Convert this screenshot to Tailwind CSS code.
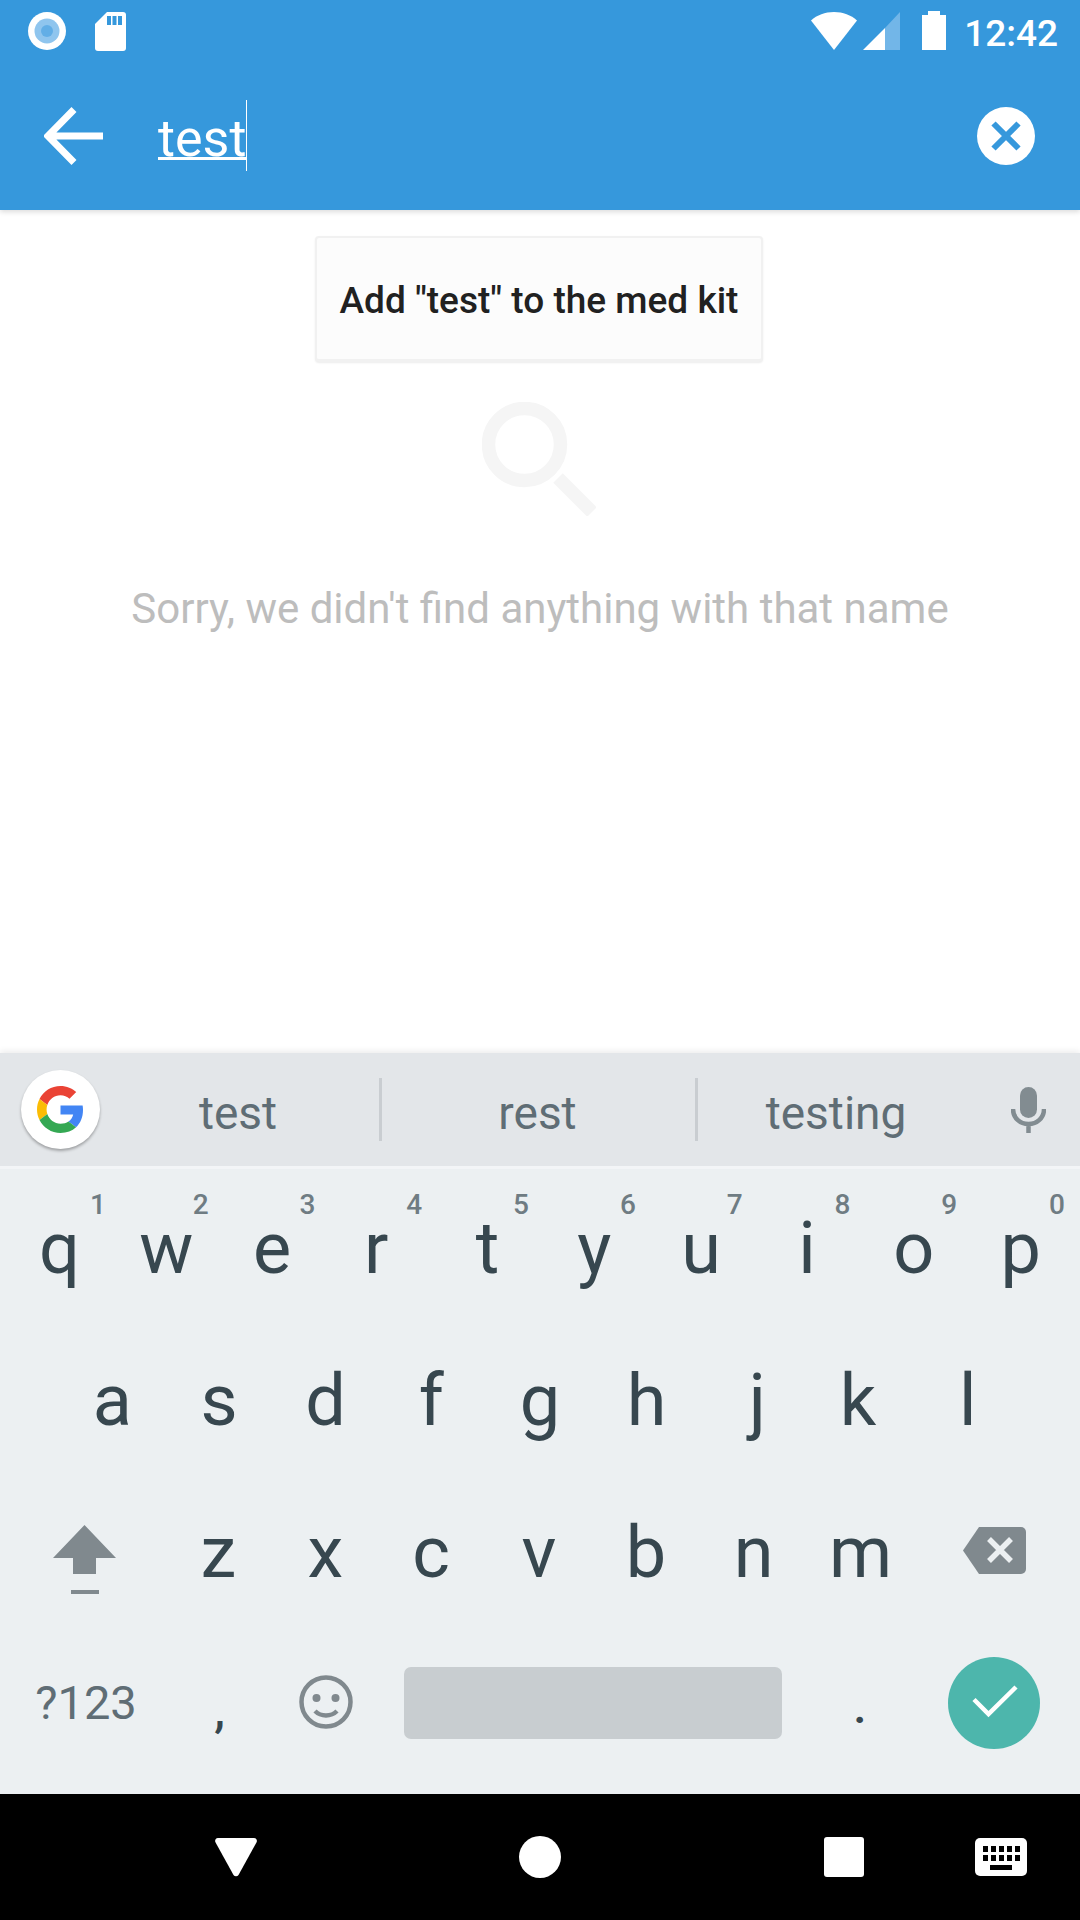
<!DOCTYPE html>
<html lang="en">
  <head>
    <meta charset="UTF-8" />
    <meta name="viewport" content="width=device-width, initial-scale=1.0" />
    <script src="https://cdn.jsdelivr.net/npm/@tailwindcss/browser@4"></script>
    <title>Search</title>
  </head>
  <body class="font-['Roboto',sans-serif]">
    <div class="w-[1080px] h-[1920px] flex flex-col bg-white overflow-hidden">
      <div class="shrink-0 bg-[#3698dc] shadow-[0_2px_5px_rgba(0,0,0,0.14)] z-10">
        <!-- status bar -->
        <div class="h-[72px] flex items-start pt-[11px] pl-[28px] pr-[22px] text-white">
          <svg class="w-[38px] h-[40px]" viewBox="0 0 38 40"><circle cx="19" cy="20" r="19" fill="#fff"/><circle cx="19" cy="20" r="12.5" fill="#8fc5ee"/><circle cx="19" cy="20" r="6" fill="#62aee6"/></svg>
          <svg class="w-[31px] h-[40px] ml-[29px]" viewBox="0 0 31 40"><path d="M12 1h16a3 3 0 0 1 3 3v33a3 3 0 0 1-3 3H3a3 3 0 0 1-3-3V13z" fill="#fff"/><path d="M12 5h4v9h-4zM17.500 5h4v9h-4zM23 5h4v9h-4z" fill="#3698dc"/></svg>
          <div class="ml-auto flex items-start">
            <svg class="w-[46px] h-[38px] mt-[1px]" viewBox="0 0 46 38"><path d="M0 8.500C6 3 14 0 23 0s17 3 23 8.500L23 38z" fill="#fff"/></svg>
            <svg class="w-[37px] h-[38px] ml-[6px] mt-[1px]" viewBox="0 0 37 38"><path d="M0 38 22 16v22z" fill="#fff"/><path d="M22 16 37 0v38H22z" fill="#72b6e8"/></svg>
            <svg class="w-[24px] h-[39px] ml-[22px]" viewBox="0 0 24 39"><path d="M6 4V0h12v4h6v35H0V4z" fill="#fff"/></svg>
            <span class="ml-[18px] text-[37px] leading-[40px] font-medium mt-[3px]">12:42</span>
          </div>
        </div>

        <!-- search header -->
        <div class="h-[138px] flex items-center pb-[10px] pl-[44px] pr-[45px]">
          <svg class="w-[59px] h-[58px]" viewBox="0 0 59 58" fill="none" stroke="#fff" stroke-width="7"><path d="M59 29H6M30 2.500 4 29l26 26.500"/></svg>
          <div class="relative ml-[55px]">
            <span class="block text-[52px] leading-[60px] pt-[6px] text-white underline decoration-[3px] underline-offset-[1px]">test</span>
            <div class="absolute right-[-1px] top-[-3px] w-px h-[71px] bg-white"></div>
          </div>
          <svg class="ml-auto w-[58px] h-[58px]" viewBox="0 0 58 58"><circle cx="29" cy="29" r="29" fill="#fff"/><path d="M16.500 16.500 41.500 41.500M41.500 16.500 16.500 41.500" stroke="#3698dc" stroke-width="6" fill="none"/></svg>
        </div>
      </div>

      <!-- results -->
      <div class="flex-1 flex flex-col items-center bg-white">
        <div class="mt-[26px] mr-[2px] w-[448px] h-[126px] shrink-0 bg-[#fcfcfc] border-2 border-[#f1f1f1] border-b-[3px] rounded-[4px] shadow-[0_1px_2px_rgba(0,0,0,0.08)] flex items-center justify-center pt-[4px]">
          <span class="text-[37px] leading-[44px] font-medium text-[#212121] whitespace-nowrap">Add "test" to the med kit</span>
        </div>
        <svg class="mt-[40px] mr-[2px] w-[114px] h-[114px]" viewBox="0 0 114 114" fill="none" stroke="#f5f5f5" stroke-width="13.500"><circle cx="42.500" cy="42.500" r="36"/><path d="M76 76l34 34"/></svg>
        <p class="mt-[70px] text-[42px] leading-[46px] text-[#bdbdbd] whitespace-nowrap">Sorry, we didn't find anything with that name</p>
      </div>

      <!-- keyboard -->
      <div class="shrink-0 shadow-[0_-2px_6px_rgba(0,0,0,0.08)] z-10">
        <!-- suggestions -->
        <div class="h-[113px] bg-[#e3e6e9] flex items-center text-[#5f6d75] text-[46px]">
          <div class="w-[96px] shrink-0 flex pl-[21px]">
            <div class="w-[79px] h-[79px] shrink-0 rounded-full bg-white shadow-[0_2px_3px_rgba(0,0,0,0.3)] flex items-center justify-center">
              <svg class="w-[47px] h-[47px]" viewBox="0 0 48 48"><path fill="#EA4335" d="M24 9.500c3.540 0 6.710 1.220 9.210 3.600l6.850-6.850C35.900 2.380 30.470 0 24 0 14.620 0 6.510 5.380 2.560 13.220l7.980 6.190C12.430 13.720 17.740 9.500 24 9.500z"/><path fill="#4285F4" d="M46.980 24.550c0-1.570-.15-3.090-.38-4.550H24v9.020h12.940c-.58 2.960-2.260 5.480-4.780 7.180l7.730 6c4.510-4.180 7.090-10.360 7.090-17.650z"/><path fill="#FBBC05" d="M10.530 28.590c-.48-1.450-.76-2.990-.76-4.590s.27-3.140.76-4.590l-7.980-6.190C.92 16.460 0 20.120 0 24c0 3.880.92 7.540 2.560 10.780l7.970-6.190z"/><path fill="#34A853" d="M24 48c6.480 0 11.930-2.130 15.890-5.810l-7.730-6c-2.150 1.450-4.920 2.300-8.160 2.300-6.260 0-11.570-4.220-13.470-9.910l-7.980 6.190C6.510 42.620 14.620 48 24 48z"/></svg>
            </div>
          </div>
          <div class="w-[283px] text-center leading-[54px] pt-[7px] pl-[1px]">test</div>
          <div class="w-[3px] h-[63px] bg-[#c9cdd1]"></div>
          <div class="w-[313px] text-center leading-[54px] pt-[7px] pr-[2px]">rest</div>
          <div class="w-[3px] h-[63px] bg-[#c9cdd1]"></div>
          <div class="w-[280px] text-center leading-[54px] pt-[7px] pr-[4px]">testing</div>
          <svg class="w-[35px] h-[46px] ml-[33px]" viewBox="0 0 35 46"><rect x="9" y="0" width="17" height="31" rx="8.500" fill="#828c91"/><path d="M2 22c0 9 7 15 15.500 15S33 31 33 22M17.500 37v9" fill="none" stroke="#828c91" stroke-width="4.500"/></svg>
        </div>
        <div class="h-[3px] bg-[#f3f5f7]"></div>

        <!-- keys -->
        <div class="h-[625px] bg-[#ecf0f2] pt-[2px] text-[#37474f] text-[72px] leading-none">
          <div class="h-[152px] px-[6px] grid grid-cols-10">
            <div class="relative flex items-center justify-center pt-[3px]">q<span class="absolute right-[7px] top-[20px] text-[28px] leading-[28px] font-medium text-[#6f7c83]">1</span></div>
            <div class="relative flex items-center justify-center pt-[3px]">w<span class="absolute right-[11px] top-[20px] text-[28px] leading-[28px] font-medium text-[#6f7c83]">2</span></div>
            <div class="relative flex items-center justify-center pt-[3px] pr-[2px]">e<span class="absolute right-[11px] top-[20px] text-[28px] leading-[28px] font-medium text-[#6f7c83]">3</span></div>
            <div class="relative flex items-center justify-center pt-[3px] pr-[7px]">r<span class="absolute right-[11px] top-[20px] text-[28px] leading-[28px] font-medium text-[#6f7c83]">4</span></div>
            <div class="relative flex items-center justify-center pt-[3px] pl-[2px]">t<span class="absolute right-[11px] top-[20px] text-[28px] leading-[28px] font-medium text-[#6f7c83]">5</span></div>
            <div class="relative flex items-center justify-center pt-[3px] pl-[2px]">y<span class="absolute right-[11px] top-[20px] text-[28px] leading-[28px] font-medium text-[#6f7c83]">6</span></div>
            <div class="relative flex items-center justify-center pt-[3px] pl-[2px]">u<span class="absolute right-[11px] top-[20px] text-[28px] leading-[28px] font-medium text-[#6f7c83]">7</span></div>
            <div class="relative flex items-center justify-center pt-[3px]">i<span class="absolute right-[10px] top-[20px] text-[28px] leading-[28px] font-medium text-[#6f7c83]">8</span></div>
            <div class="relative flex items-center justify-center pt-[3px]">o<span class="absolute right-[10px] top-[20px] text-[28px] leading-[28px] font-medium text-[#6f7c83]">9</span></div>
            <div class="relative flex items-center justify-center pt-[3px]">p<span class="absolute right-[9px] top-[20px] text-[28px] leading-[28px] font-medium text-[#6f7c83]">0</span></div>
          </div>
          <div class="h-[152px] pl-[59px] pr-[61px] grid grid-cols-9">
            <div class="flex items-center justify-center pt-[3px]">a</div>
            <div class="flex items-center justify-center pt-[3px]">s</div>
            <div class="flex items-center justify-center pt-[3px]">d</div>
            <div class="flex items-center justify-center pt-[3px] pr-[2px]">f</div>
            <div class="flex items-center justify-center pt-[3px] pl-[2px]">g</div>
            <div class="flex items-center justify-center pt-[3px] pl-[2px]">h</div>
            <div class="flex items-center justify-center pt-[3px] pl-[10px]">j</div>
            <div class="flex items-center justify-center pt-[3px] pr-[2px]">k</div>
            <div class="flex items-center justify-center pt-[3px] pl-[4px]">l</div>
          </div>
          <div class="h-[152px] px-[6px] flex">
            <div class="w-[159px] flex items-center justify-center pt-[17px] pr-[3px]">
              <svg class="w-[63px] h-[69px]" viewBox="0 0 63 69"><path d="M31.500 0 63 33H43v16H20V33H0z" fill="#80898e"/><rect x="18" y="65" width="28" height="4" fill="#80898e"/></svg>
            </div>
            <div class="flex-1 grid grid-cols-7">
              <div class="flex items-center justify-center pt-[3px]">z</div>
              <div class="flex items-center justify-center pt-[3px]">x</div>
              <div class="flex items-center justify-center pt-[3px] pr-[2px]">c</div>
              <div class="flex items-center justify-center pt-[3px]">v</div>
              <div class="flex items-center justify-center pt-[3px]">b</div>
              <div class="flex items-center justify-center pt-[3px] pl-[2px]">n</div>
              <div class="flex items-center justify-center pt-[3px] pl-[2px]">m</div>
            </div>
            <div class="w-[161px] flex items-center justify-center pb-[2px] pl-[2px]">
              <svg class="w-[63px] h-[47px]" viewBox="0 0 63 47"><path d="M16 0h42a5 5 0 0 1 5 5v37a5 5 0 0 1-5 5H16L0 23.500z" fill="#80898e"/><path d="M26 12 48 34M48 12 26 34" stroke="#ecf0f2" stroke-width="5.500" fill="none"/></svg>
            </div>
          </div>
          <div class="h-[152px] px-[6px] flex">
            <div class="w-[160px] flex items-center justify-center text-[47px] text-[#5f6d75] pb-[2px]">?123</div>
            <div class="w-[107px] flex items-center justify-center text-[48px] font-medium pt-[14px]">,</div>
            <div class="w-[107px] flex items-center justify-center pr-[2px] pb-[2px]">
              <svg class="w-[54px] h-[54px]" viewBox="0 0 54 54" fill="none"><circle cx="27" cy="27" r="24.500" stroke="#80898e" stroke-width="4.500"/><circle cx="17.500" cy="23" r="4" fill="#80898e"/><circle cx="36.500" cy="23" r="4" fill="#80898e"/><path d="M16 36c3 3 7 4.500 11 4.500s8-1.500 11-4.500" stroke="#80898e" stroke-width="4.500"/></svg>
            </div>
            <div class="w-[378px] flex items-center ml-[24px] shrink-0">
              <div class="w-[378px] h-[72px] shrink-0 bg-[#c8cdd0] rounded-[7px]"></div>
            </div>
            <div class="flex-1 flex items-center justify-center text-[48px] font-medium pt-[8px] pl-[24px]">.</div>
            <div class="w-[160px] flex items-center justify-center">
              <svg class="w-[92px] h-[92px]" viewBox="0 0 92 92"><circle cx="46" cy="46" r="46" fill="#4db6ac"/><path d="M26 42.500 40.500 57 68 30" fill="none" stroke="#fff" stroke-width="4.500"/></svg>
            </div>
          </div>
        </div>

        <!-- nav bar -->
        <div class="h-[126px] bg-black flex items-center">
          <svg class="ml-[215px] w-[42px] h-[39px]" viewBox="0 0 42 39"><path d="M3 0h36a3 3 0 0 1 2.700 4L23.500 37a3 3 0 0 1-5 0L.300 4A3 3 0 0 1 3 0z" fill="#fff"/></svg>
          <div class="ml-[262px] w-[42px] h-[42px] rounded-full bg-white"></div>
          <div class="ml-[263px] w-[40px] h-[40px] rounded-[3px] bg-white"></div>
          <svg class="ml-[111px] w-[52px] h-[38px]" viewBox="0 0 52 38"><rect width="52" height="38" rx="5" fill="#fff"/><path d="M8 8h5v6H8zM16 8h5v6h-5zM24 8h5v6h-5zM32 8h5v6h-5zM40 8h5v6h-5zM8 17h5v6H8zM16 17h5v6h-5zM24 17h5v6h-5zM32 17h5v6h-5zM40 17h5v6h-5zM15 27h22v5H15z" fill="#000"/></svg>
        </div>
      </div>
    </div>
  </body>
</html>
